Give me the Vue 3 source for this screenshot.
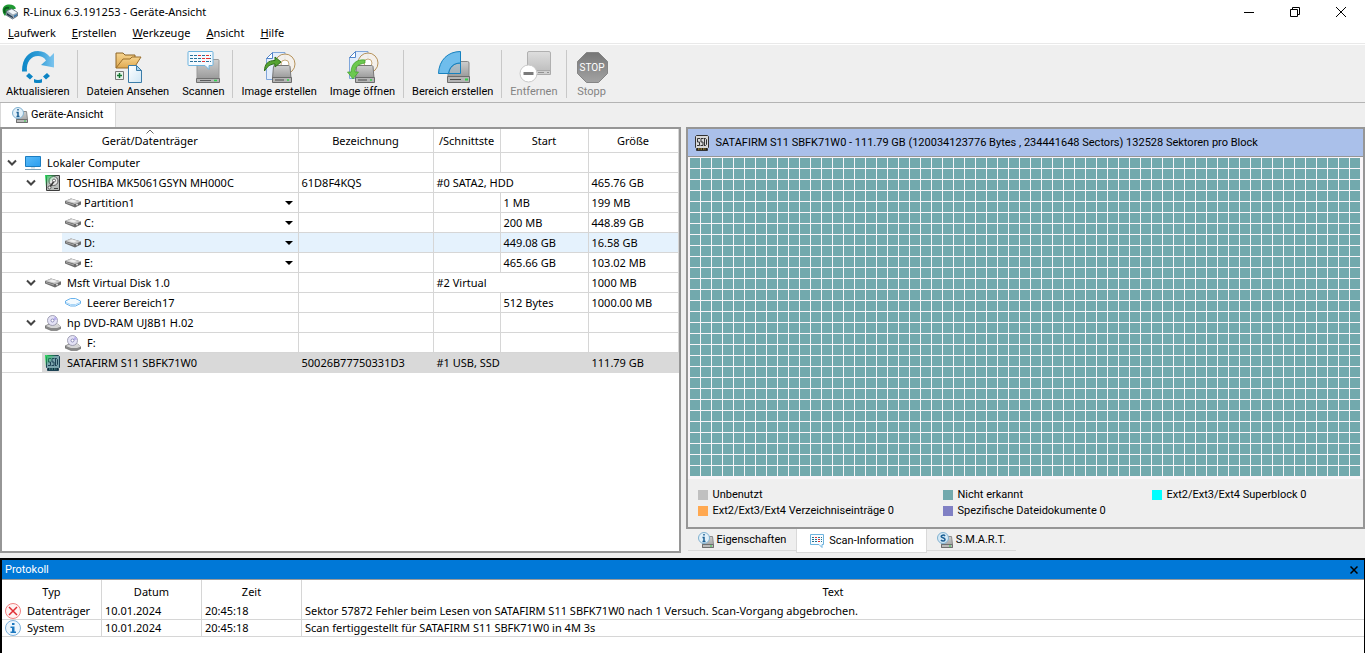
<script setup>
const menus = ['Laufwerk', 'Erstellen', 'Werkzeuge', 'Ansicht', 'Hilfe']

const toolGroups = [
  [{ label: 'Aktualisieren', icon: 'refresh' }],
  [{ label: 'Dateien Ansehen', icon: 'files' }, { label: 'Scannen', icon: 'scan' }],
  [{ label: 'Image erstellen', icon: 'image-create' }, { label: 'Image öffnen', icon: 'image-open' }],
  [{ label: 'Bereich erstellen', icon: 'region' }],
  [{ label: 'Entfernen', icon: 'remove', disabled: true }],
  [{ label: 'Stopp', icon: 'stop', disabled: true, caption: 'STOP' }],
]

const devices = [
  { level: 0, open: true, icon: 'monitor', name: 'Lokaler Computer' },
  { level: 1, open: true, icon: 'hdd', name: 'TOSHIBA MK5061GSYN MH000C', label: '61D8F4KQS', bus: '#0 SATA2, HDD', size: '465.76 GB' },
  { level: 2, icon: 'drive', name: 'Partition1', menu: true, start: '1 MB', size: '199 MB' },
  { level: 2, icon: 'drive', name: 'C:', menu: true, start: '200 MB', size: '448.89 GB' },
  { level: 2, icon: 'drive', name: 'D:', menu: true, start: '449.08 GB', size: '16.58 GB', state: 'hover' },
  { level: 2, icon: 'drive', name: 'E:', menu: true, start: '465.66 GB', size: '103.02 MB' },
  { level: 1, open: true, icon: 'drive', name: 'Msft Virtual Disk 1.0', bus: '#2 Virtual', size: '1000 MB' },
  { level: 2, icon: 'empty', name: 'Leerer Bereich17', wide: true, start: '512 Bytes', size: '1000.00 MB' },
  { level: 1, open: true, icon: 'dvd', name: 'hp DVD-RAM UJ8B1 H.02' },
  { level: 2, icon: 'dvd', name: 'F:', wide: true },
  { level: 1, icon: 'ssd-green', name: 'SATAFIRM S11 SBFK71W0', label: '50026B77750331D3', bus: '#1 USB, SSD', size: '111.79 GB', state: 'selected' },
]

const legend = [
  { text: 'Unbenutzt', kind: 'unused' },
  { text: 'Nicht erkannt', kind: 'unknown' },
  { text: 'Ext2/Ext3/Ext4 Superblock 0', kind: 'super' },
  { text: 'Ext2/Ext3/Ext4 Verzeichniseinträge 0', kind: 'dirs' },
  { text: 'Spezifische Dateidokumente 0', kind: 'docs' },
]

const infoTabs = [
  { label: 'Eigenschaften', icon: 'info-disk' },
  { label: 'Scan-Information', icon: 'bubble', active: true },
  { label: 'S.M.A.R.T.', icon: 'smart' },
]

const log = [
  { type: 'Datenträger', icon: 'error', date: '10.01.2024', time: '20:45:18', text: 'Sektor 57872 Fehler beim Lesen von SATAFIRM S11 SBFK71W0 nach 1 Versuch. Scan-Vorgang abgebrochen.' },
  { type: 'System', icon: 'info', date: '10.01.2024', time: '20:45:18', text: 'Scan fertiggestellt für SATAFIRM S11 SBFK71W0 in 4M 3s' },
]
</script>

<template>
  <svg class="sprite" width="0" height="0" aria-hidden="true">
    <defs>
      <linearGradient id="g-disk" x1="0" y1="0" x2="0" y2="1">
        <stop offset="0" stop-color="#cecece" /><stop offset="1" stop-color="#9a9a9a" />
      </linearGradient>
      <linearGradient id="g-pale" x1="0" y1="0" x2="0" y2="1">
        <stop offset="0" stop-color="#dedede" /><stop offset="1" stop-color="#bdbdbd" />
      </linearGradient>
      <linearGradient id="g-blue" x1="0" y1="0" x2="1" y2="0">
        <stop offset="0" stop-color="#0c86c6" /><stop offset="0.5" stop-color="#2d9bd6" /><stop offset="1" stop-color="#7cc4ee" />
      </linearGradient>
      <linearGradient id="g-screen" x1="0" y1="0" x2="1" y2="1">
        <stop offset="0" stop-color="#5bbcf8" /><stop offset="1" stop-color="#2a9df0" />
      </linearGradient>
      <linearGradient id="g-folder" x1="0" y1="0" x2="0" y2="1">
        <stop offset="0" stop-color="#f6d490" /><stop offset="1" stop-color="#dfa94f" />
      </linearGradient>
      <linearGradient id="g-sheet" x1="0" y1="0" x2="1" y2="1">
        <stop offset="0" stop-color="#ffffff" /><stop offset="1" stop-color="#cfe6f5" />
      </linearGradient>
      <linearGradient id="g-corner" x1="0" y1="0" x2="1" y2="1">
        <stop offset="0" stop-color="#1fd455" /><stop offset="0.4" stop-color="#1fd455" stop-opacity="0" />
      </linearGradient>
      <linearGradient id="g-stop" x1="0" y1="0" x2="0" y2="1">
        <stop offset="0" stop-color="#767676" /><stop offset="1" stop-color="#a3a3a3" />
      </linearGradient>
    </defs>

    <symbol id="logo" viewBox="0 0 16 16">
      <path d="M3 12C-1 8 0 1 6 .5c4-.5 7 1 8 4l-4 1.500-5 3z" fill="#1f9a32" />
      <path d="M3 9C1 5 4 3 7 4" fill="none" stroke="#0c5a1c" stroke-width="2" />
      <path d="M4.500 7l5-2.500 6 4V12l-5 3-6.500-4z" fill="#9caab6" stroke="#4e5a66" stroke-width=".7" />
      <path d="M6 7l4-1.500 5 3-4 2z" fill="#f1f6fa" />
      <path d="M5 9l6 4v1l-6-3z" fill="#1d3144" />
      <path d="M12 11.500l3-1.500v1.500l-3 2z" fill="#3577ad" />
    </symbol>

    <symbol id="refresh" viewBox="0 0 34 34">
      <path d="M1 21.500C1 8 8 1 17 1c5 0 9 2 12 6l4-4v14.500L20 15l5-4.500C23 7 20 6 17 6 10 6 5 12 6 21.500z" fill="url(#g-blue)" />
      <path d="M5 26l3-3 4 3.500-3 3zM13 29q4 2 8 0v3.500q-4 1-8 0zM22 26.500l4-3.500 3 3-4 3.500z" fill="#0c84c4" />
    </symbol>

    <symbol id="files" viewBox="0 0 34 34">
      <path d="M5 18V3h7l2 2h10v4" fill="url(#g-folder)" stroke="#8c6427" />
      <path d="M5 18l7-9h7l2-2h9l-7 11z" fill="url(#g-folder)" stroke="#9a6e2c" />
      <path d="M4.500 21.500h8v8h-8z" fill="#e6f3ea" stroke="#777" />
      <path d="M8.500 23v5M6 25.500h5" stroke="#12752e" stroke-width="1.500" />
      <path d="M17.500 15.500h8l5 5v12h-13z" fill="url(#g-sheet)" stroke="#3b7ca8" />
      <path d="M25.500 15.500v5h5z" fill="#a9d3ee" stroke="#3b7ca8" />
    </symbol>

    <symbol id="scan" viewBox="0 0 34 34">
      <path d="M12 9.500h20q1 0 1 1V29H11V10.500z" fill="url(#g-disk)" stroke="#999" />
      <path d="M10.500 28.500h23v4h-23z" fill="#b4b4b4" stroke="#707070" />
      <path d="M14 30.500h11" stroke="#5c5c5c" /><path d="M28 30.500h3" stroke="#2fd04c" stroke-width="1.500" />
      <path d="M3 1.500h23q1 0 1 1v12q0 1-1 1h-3v4l-4-4H3q-1 0-1-1v-12q0-1 1-1z" fill="#f4faff" stroke="#6db3de" />
      <path d="M4 5.500h21M4 8.500h21M4 11.500h21" stroke="#27709a" stroke-dasharray="3 1" />
      <path d="M12 5.500h3M20 5.500h3M16 8.500h3M20 8.500h4M16 11.500h3" stroke="#e03434" />
    </symbol>

    <symbol id="small-disk" viewBox="0 0 20 18">
      <path d="M2.500.5h14q1 0 1.500 1l1 11.500H.5l1-11.500q0-1 1-1z" fill="url(#g-disk)" stroke="#777" />
      <path d="M.5 12.500h19v5H.5z" fill="#b4b4b4" stroke="#6b6b6b" />
      <path d="M3 15h9" stroke="#4c4c4c" /><path d="M15 15h2" stroke="#36d447" stroke-width="1.500" />
    </symbol>

    <symbol id="image-create" viewBox="0 0 34 34">
      <path d="M10.500 2.500H23v27H4.500v-21z" fill="#e3edfb" stroke="#7fa6da" /><path d="M10.500 2.500v6h-6z" fill="#fff" stroke="#5284c8" />
      <circle cx="23" cy="14" r="10" fill="#f4f0ea" fill-opacity=".9" stroke="#b6935c" />
      <circle cx="23" cy="14" r="4" fill="#fff" stroke="#c5a878" />
      <use href="#small-disk" x="10" y="15" width="20" height="18" />
      <path d="M2.500 21C2.500 14 6 10.500 13 10.500V7l6 5-6 5v-3c-4 0-7 1.500-10.500 7z" fill="#55a331" stroke="#2f6e1a" />
    </symbol>

    <symbol id="image-open" viewBox="0 0 34 34">
      <path d="M10.500 1.500H23v27H4.500v-21z" fill="#e3edfb" stroke="#7fa6da" /><path d="M10.500 1.500v6h-6z" fill="#fff" stroke="#5284c8" />
      <circle cx="23" cy="13" r="10" fill="#f4f0ea" fill-opacity=".9" stroke="#b6935c" />
      <circle cx="23" cy="13" r="4" fill="#fff" stroke="#c5a878" />
      <use href="#small-disk" x="10" y="15" width="20" height="18" />
      <path d="M20 10C12 9 6.500 13 6 22H2.500L8 29l5.500-7H10c0-5 3-8 10-9z" fill="#6cc850" stroke="#3fa02a" stroke-width=".7" />
    </symbol>

    <symbol id="region" viewBox="0 0 34 34">
      <path d="M13.500 11.500h18q1.500 0 1.500 1.500v14H12V13q0-1.500 1.500-1.500z" fill="url(#g-disk)" stroke="#868686" />
      <path d="M11.500 26.500h22v6h-22z" fill="#b4b4b4" stroke="#6d6d6d" />
      <path d="M14 29.500h11" stroke="#4f4f4f" /><path d="M29 29.500h3" stroke="#35d04a" stroke-width="2" />
      <path d="M12.500 23.500c1-6 5-10.500 12-10.500v10.500z" fill="#9db9ca" fill-opacity=".6" stroke="#1681bf" />
      <path d="M2.500 23.500C3 10 12 1.500 24.500 1.500v11.500c-7 0-11 4-12 10.500z" fill="#6fbdec" stroke="#1681bf" />
    </symbol>

    <symbol id="remove" viewBox="0 0 34 34">
      <path d="M12 1.500h20q1.500 0 1.500 1.500v19h-23V3q0-1.500 1.500-1.500z" fill="url(#g-pale)" stroke="#b0b0b0" />
      <path d="M10.500 20.500h23v4h-23z" fill="#d0d0d0" stroke="#aaa" /><path d="M21 22.500h6M30 22.500h2" stroke="#929292" />
      <circle cx="11.500" cy="23.500" r="8.500" fill="#fff" stroke="#c9c9c9" />
      <path d="M6.500 23.500h10" stroke="#7b7b7b" stroke-width="3" />
    </symbol>

    <symbol id="stop" viewBox="0 0 34 34">
      <path d="M11.500 2.500h12l9 9v12l-9 9h-12l-9-9v-12z" fill="url(#g-stop)" stroke="#858585" />
    </symbol>

    <symbol id="monitor" viewBox="0 0 16 16">
      <path d="M.5 1.500h15v10H.5z" fill="url(#g-screen)" stroke="#1b7cc0" />
      <path d="M6 12h4v1.500H6z" fill="#d3dce2" /><path d="M0 14.500h16" stroke="#7fa3ba" />
    </symbol>

    <symbol id="hdd" viewBox="0 0 16 16">
      <path d="M1.500.5h13v15h-13z" fill="#b9bdbb" stroke="#3c3c3c" />
      <circle cx="8.500" cy="6" r="4.500" fill="#e7e7e7" stroke="#5b5b5b" /><circle cx="9" cy="5.500" r="1.500" fill="#fff" stroke="#444" stroke-width=".8" />
      <path d="M8.500 7l-4 5.500" stroke="#333" stroke-width="1.500" /><circle cx="4.500" cy="12.500" r="1.500" fill="#eee" stroke="#333" stroke-width=".7" />
      <path d="M9 13.500h4" stroke="#444" /><path d="M0 0h16v16H0z" fill="url(#g-corner)" />
    </symbol>

    <symbol id="drive" viewBox="0 0 16 16">
      <path d="M0 6l6-2.500L16 6.500v3l-6 3L0 8.500z" fill="#6a6a6a" />
      <path d="M0 6l6-2.500L16 6.500l-6 2.500z" fill="#c7c7c7" /><path d="M3 6l4-1.500 5 1.500-3 1.500z" fill="#efefef" />
      <path d="M1 7.500l8 2.500" stroke="#b5b5b5" stroke-width=".8" /><circle cx="12" cy="9.500" r="1" fill="#ddd" />
    </symbol>

    <symbol id="empty" viewBox="0 0 16 16">
      <path d="M.5 6l5-2.500h5l5 2.500v2.500l-5 2.500h-5l-5-2.500z" fill="#f3faff" stroke="#68b2ec" /><path d="M1 7.500l4.500 2h5l4.500-2" fill="none" stroke="#a9d5f6" />
    </symbol>

    <symbol id="dvd" viewBox="0 0 16 16">
      <path d="M0 11l4-2h9l3 3v1.500L12 15.500H6L0 13z" fill="#898989" stroke="#5a5a5a" stroke-width=".5" />
      <path d="M1 11l4-2h8l3 2.500-4 1.500H6z" fill="#d5d5d5" />
      <circle cx="7.500" cy="5.500" r="5" fill="#e4e2f5" stroke="#8d8da3" stroke-width=".8" /><path d="M7.500 5.500L10 1.500a5 5 0 0 1 2 3z" fill="#b9b0ee" />
      <circle cx="7.500" cy="5.500" r="1.500" fill="#fff" stroke="#6c6ca0" stroke-width=".7" />
    </symbol>

    <symbol id="ssd-body" viewBox="0 0 16 16">
      <path d="M2.500.500h11l1 1v11l-1 1v2h-11v-2l-1-1v-11z" />
      <path d="M6 3.500H3.500V7h2v3.500H3M9.500 3.500H7V7h2v3.500H6.500M10.500 3v8M10.500 3.500h1l1 1v5l-1 1h-1" fill="none" stroke-width="1" />
    </symbol>
    <symbol id="ssd" viewBox="0 0 16 16">
      <use href="#ssd-body" width="16" height="16" fill="#d8d8d8" stroke="#333" />
      <path d="M3 14h10" stroke="#222" stroke-width="2" /><path d="M4 14h8" stroke="#e0b83a" stroke-dasharray="1.500 1" />
    </symbol>
    <symbol id="ssd-green" viewBox="0 0 16 16">
      <use href="#ssd-body" width="16" height="16" fill="#7ba4ad" stroke="#1d4254" />
      <path d="M3 14h10" stroke="#102c3c" stroke-width="2" /><path d="M4 14h8" stroke="#5cb5ad" stroke-dasharray="1.500 1" />
      <path d="M0 0h16v16H0z" fill="url(#g-corner)" />
    </symbol>

    <symbol id="mini-disk" viewBox="0 0 16 16">
      <path d="M4.500 4.500h10l1 8v3h-11z" fill="url(#g-disk)" stroke="#8a8a8a" /><path d="M4.500 12.500h11v3h-11z" fill="#bbb" stroke="#6f6f6f" />
      <path d="M12 14h2" stroke="#35d04a" />
    </symbol>
    <symbol id="info-disk" viewBox="0 0 16 16">
      <use href="#mini-disk" width="16" height="16" /><circle cx="6" cy="6" r="5.500" fill="#e2f0f9" stroke="#7fb0cf" />
      <path d="M6 2v1.500M4.500 5.500H6V9M4.500 9.500h3" fill="none" stroke="#1c5f94" stroke-width="1.500" />
    </symbol>
    <symbol id="smart" viewBox="0 0 16 16">
      <use href="#mini-disk" width="16" height="16" /><circle cx="6" cy="6" r="5.500" fill="#d5e9f6" stroke="#7fb0cf" />
      <path d="M8 4C7 2.500 4 3 4.200 4.600 4.500 6.200 8 5.500 8 7.500 8 9.500 5 9.300 4 8" fill="none" stroke="#1c5f94" stroke-width="1.500" />
    </symbol>
    <symbol id="bubble" viewBox="0 0 16 16">
      <path d="M1.500 1.500h13v10H13v3l-3-3H1.500z" fill="#f7fcff" stroke="#6db3de" />
      <path d="M3 4.500h10M3 6.500h10M3 8.500h10" stroke="#27708f" stroke-dasharray="2 1" /><path d="M6 4.500h2M9 6.500h2M9 8.500h2" stroke="#df3030" />
    </symbol>
    <symbol id="error" viewBox="0 0 16 16">
      <circle cx="8" cy="8" r="7.500" fill="#fff3f3" stroke="#f08080" /><path d="M4 4l8 8M12 4l-8 8" stroke="#e02c34" stroke-width="1.500" />
    </symbol>
    <symbol id="info" viewBox="0 0 16 16">
      <circle cx="8" cy="8" r="7.500" fill="#edf6fd" stroke="#7eb2dc" />
      <path d="M7 3h2.500v2H7zM5.500 6.500h4v5H11V13H5.500v-1.500H7V8H5.500z" fill="#1c78c0" />
    </symbol>
  </svg>

  <div class="window">
    <header class="titlebar">
      <svg class="ico"><use href="#logo" /></svg>
      <h1>R-Linux 6.3.191253 - Geräte-Ansicht</h1>
      <div class="controls">
        <button type="button" aria-label="Minimieren"><svg viewBox="0 0 12 12"><path d="M1 6.500h10" /></svg></button>
        <button type="button" aria-label="Wiederherstellen"><svg viewBox="0 0 12 12"><path d="M1.500 3.500h7v7h-7zM3.500 3.500v-2h7v7h-2" /></svg></button>
        <button type="button" aria-label="Schließen"><svg viewBox="0 0 12 12"><path d="M1 1l10 10M11 1L1 11" /></svg></button>
      </div>
    </header>

    <nav class="menubar">
      <button v-for="m in menus" :key="m" type="button"><u>{{ m[0] }}</u>{{ m.slice(1) }}</button>
    </nav>

    <div class="toolbar">
      <div v-for="(group, i) in toolGroups" :key="i" class="group">
        <button v-for="t in group" :key="t.label" type="button" :disabled="t.disabled">
          <svg viewBox="0 0 34 34">
            <use :href="'#' + t.icon" />
            <text v-if="t.caption" class="caption" x="17" y="21">{{ t.caption }}</text>
          </svg>
          <span>{{ t.label }}</span>
        </button>
      </div>
    </div>

    <div class="view-tabs">
      <button type="button"><svg class="ico"><use href="#info-disk" /></svg>Geräte-Ansicht</button>
    </div>

    <main class="split">
      <section class="devices">
        <table>
          <colgroup><col /><col class="c-label" /><col class="c-bus" /><col class="c-start" /><col class="c-size" /></colgroup>
          <thead>
            <tr>
              <th><svg class="sort" viewBox="0 0 8 5"><path d="M.5 4.500L4 1l3.500 3.500" /></svg>Gerät/Datenträger</th>
              <th>Bezeichnung</th>
              <th>/Schnittste</th>
              <th>Start</th>
              <th>Größe</th>
            </tr>
          </thead>
          <tbody>
            <tr v-for="d in devices" :key="d.name" :class="d.state">
              <td class="name">
                <div class="node" :class="'level-' + d.level">
                  <div class="indent">
                    <button v-if="d.open" type="button" class="twisty" :aria-label="d.name + ' zuklappen'">
                      <svg viewBox="0 0 10 7"><path d="M1 1.500l4 4 4-4" /></svg>
                    </button>
                  </div>
                  <div class="body">
                    <svg class="ico"><use :href="'#' + d.icon" /></svg>
                    <span :class="{ wide: d.wide }">{{ d.name }}</span>
                    <button v-if="d.menu" type="button" class="drop" :aria-label="'Menü ' + d.name">
                      <svg viewBox="0 0 8 4"><path d="M0 0h8L4 4z" /></svg>
                    </button>
                  </div>
                </div>
              </td>
              <td>{{ d.label }}</td>
              <td :colspan="d.bus ? 2 : 1">{{ d.bus }}</td>
              <td v-if="!d.bus">{{ d.start }}</td>
              <td>{{ d.size }}</td>
            </tr>
          </tbody>
        </table>
      </section>

      <section class="inspector">
        <div class="scan">
          <h2><svg class="ico"><use href="#ssd" /></svg>SATAFIRM S11 SBFK71W0 - 111.79 GB (120034123776 Bytes , 234441648 Sectors) 132528 Sektoren pro Block</h2>
          <div class="map"><div class="blocks"></div></div>
          <ul class="legend">
            <li v-for="l in legend" :key="l.kind"><i :class="l.kind"></i>{{ l.text }}</li>
          </ul>
        </div>
        <div class="info-tabs">
          <button v-for="t in infoTabs" :key="t.label" type="button" :class="{ active: t.active }">
            <svg class="ico"><use :href="'#' + t.icon" /></svg>{{ t.label }}
          </button>
        </div>
      </section>
    </main>

    <section class="log">
      <header>
        <h2>Protokoll</h2>
        <button type="button" aria-label="Protokoll schließen"><svg viewBox="0 0 8 8"><path d="M.5.500l7 7M7.500.500l-7 7" /></svg></button>
      </header>
      <table>
        <colgroup><col class="c-log" /><col class="c-log" /><col class="c-log" /><col /></colgroup>
        <thead><tr><th>Typ</th><th>Datum</th><th>Zeit</th><th>Text</th></tr></thead>
        <tbody>
          <tr v-for="e in log" :key="e.type">
            <td class="type"><div><svg class="ico"><use :href="'#' + e.icon" /></svg>{{ e.type }}</div></td>
            <td>{{ e.date }}</td>
            <td>{{ e.time }}</td>
            <td>{{ e.text }}</td>
          </tr>
        </tbody>
      </table>
    </section>
  </div>
</template>

<style>
html, body, #app { height: 100%; }
body { margin: 0; overflow: hidden; }
</style>

<style scoped>
.sprite { position: absolute; }
.window {
  --base: "Noto Sans", "Open Sans", sans-serif;
  --compact: Roboto, "Open Sans", sans-serif;
  display: flex;
  flex-direction: column;
  height: 100%;
  background: #efefef;
  color: #000;
  font: 11px/18px var(--base);
  white-space: nowrap;
}
button { padding: 0; border: 0; background: none; color: inherit; font: inherit; }
h1, h2, ul { margin: 0; padding: 0; font: inherit; }
.ico { width: 16px; height: 16px; flex: none; }

.titlebar { display: flex; align-items: center; height: 23px; padding: 0 1px 0 2px; background: #fff; }
.titlebar h1 { margin-left: 5px; }
.controls { display: flex; margin-left: auto; }
.controls button { display: grid; place-items: center; width: 46px; height: 20px; }
.controls svg { width: 12px; height: 12px; fill: none; stroke: #000; }

.menubar { display: flex; gap: 16px; height: 20px; padding-left: 8px; background: #fff; border-bottom: 1px solid #e9e9e9; }
.menubar button { line-height: 20px; }

.toolbar { display: flex; height: 52px; padding: 5px 0 0; border-top: 1px solid #fff; border-bottom: 1px solid #b4b4b4; font: 11px/16px var(--compact); }
.group { display: flex; gap: 13px; height: 48px; padding: 0 8px; border-right: 1px solid #c8c8c8; }
.group:first-child { padding-left: 6px; }
.group:last-child { border: 0; }
.group button { display: flex; flex-direction: column; align-items: center; }
.group svg { width: 34px; height: 34px; flex: none; overflow: visible; }
.group button:disabled { color: #838383; }
.caption { font: 10px Roboto, sans-serif; fill: #fff; text-anchor: middle; }

.view-tabs { display: flex; height: 24px; font: 11px/24px var(--compact); }
.view-tabs button { display: flex; align-items: center; gap: 3px; padding: 0 12px 0 11px; border-right: 1px solid #d9d9d9; border-left: 1px solid #d9d9d9; background: #fff; }

.split { display: flex; gap: 5px; flex: none; height: 426px; }
.devices { flex: none; width: calc(50% - 2px); background: #fff; border: 2px solid #969696; box-sizing: border-box; }
table { width: 100%; border-collapse: separate; border-spacing: 0; table-layout: fixed; }
th, td { padding: 0 3px; font-weight: 400; text-align: left; border: 0 solid #d6d6d6; border-right-width: 1px; border-bottom-width: 1px; }
.c-label { width: 135px; }
.c-bus { width: 67px; }
.c-start { width: 88px; }
.c-size { width: 90px; }
.devices th { position: relative; height: 23px; text-align: center; line-height: 23px; }
.devices td { height: 19px; line-height: 19px; }
.devices .name { padding: 0; }
.sort { position: absolute; top: 0; left: 50%; width: 8px; height: 5px; margin-left: -4px; fill: none; stroke: #666; }
.node { display: flex; }
.indent { display: flex; justify-content: flex-end; flex: none; background: #fff; }
.level-0 .indent { width: 20px; }
.level-1 .indent { width: 40px; }
.level-2 .indent { width: 60px; }
.twisty { display: grid; place-items: center; width: 22px; height: 19px; }
.twisty svg { width: 10px; height: 7px; fill: none; stroke: #444; stroke-width: 2; }
.body { display: flex; align-items: center; flex: 1; padding: 0 4px 0 3px; }
.body span { margin-left: 6px; }
.level-2 .body span { margin-left: 3px; }
.level-2 .body .wide { margin-left: 6px; }
.drop { display: grid; place-items: center; width: 9px; height: 19px; margin-left: auto; }
.drop svg { width: 8px; height: 4px; }
.hover td { background: #e5f2fd; }
.selected td { background: #d9d9d9; border-color: #d9d9d9; }

.inspector { display: flex; flex: 1; min-width: 0; flex-direction: column; }
.scan { display: flex; flex-direction: column; flex: 1; border: 2px solid #969696; font: 11px/16px var(--compact); }
.scan h2 { display: flex; align-items: center; gap: 6px; height: 27px; padding-left: 6px; background: #aac0ea; border-bottom: 1px solid #969696; }
.map { padding: 1px 3px 2px 2px; background: #f8f5f8; }
.blocks { height: 319px; background: repeating-linear-gradient(90deg, transparent 0 10px, #f8f5f8 10px 11px), repeating-linear-gradient(#72a9ad 0 10px, #f8f5f8 10px 11px); }
.legend { display: grid; grid-template-columns: 245px 209px 1fr; padding: 8px 10px; list-style: none; }
.legend li { display: flex; align-items: center; gap: 5px; }
.legend i { width: 10px; height: 10px; }
.unused { background: #c0c0c0; }
.unknown { background: #72a9ad; }
.super { background: #00ffff; }
.dirs { background: #ffa850; }
.docs { background: #8080c4; }
.info-tabs { display: flex; align-items: flex-start; height: 24px; padding-left: 2px; font: 11px/20px var(--compact); }
.info-tabs button { display: flex; align-items: center; gap: 3px; height: 22px; padding: 1px 10px 0; border-bottom: 1px solid #d9d9d9; }
.info-tabs .active { height: 24px; padding: 0 12px; gap: 4px; background: #fff; border: 1px solid #d9d9d9; border-top: 0; }

.log { flex: 1; margin-top: 5px; background: #fff; border: 2px solid #000; border-right-width: 1px; border-bottom: 0; }
.log header { display: flex; align-items: center; justify-content: space-between; height: 19px; padding: 0 6px 0 3px; background: #0078d7; border-bottom: 1px solid #9a9a9a; color: #fff; font: 11px/19px var(--compact); }
.log header svg { display: block; width: 8px; height: 8px; stroke: #000; stroke-width: 1.5px; }
.c-log { width: 100px; }
.log th { height: 23px; text-align: center; border-bottom: 0; }
.log td { height: 16px; line-height: 16px; }
.log .type { padding: 0 3px; }
.type div { display: flex; gap: 6px; }
.log th:last-child, .log td:last-child { border-right: 0; }
</style>
